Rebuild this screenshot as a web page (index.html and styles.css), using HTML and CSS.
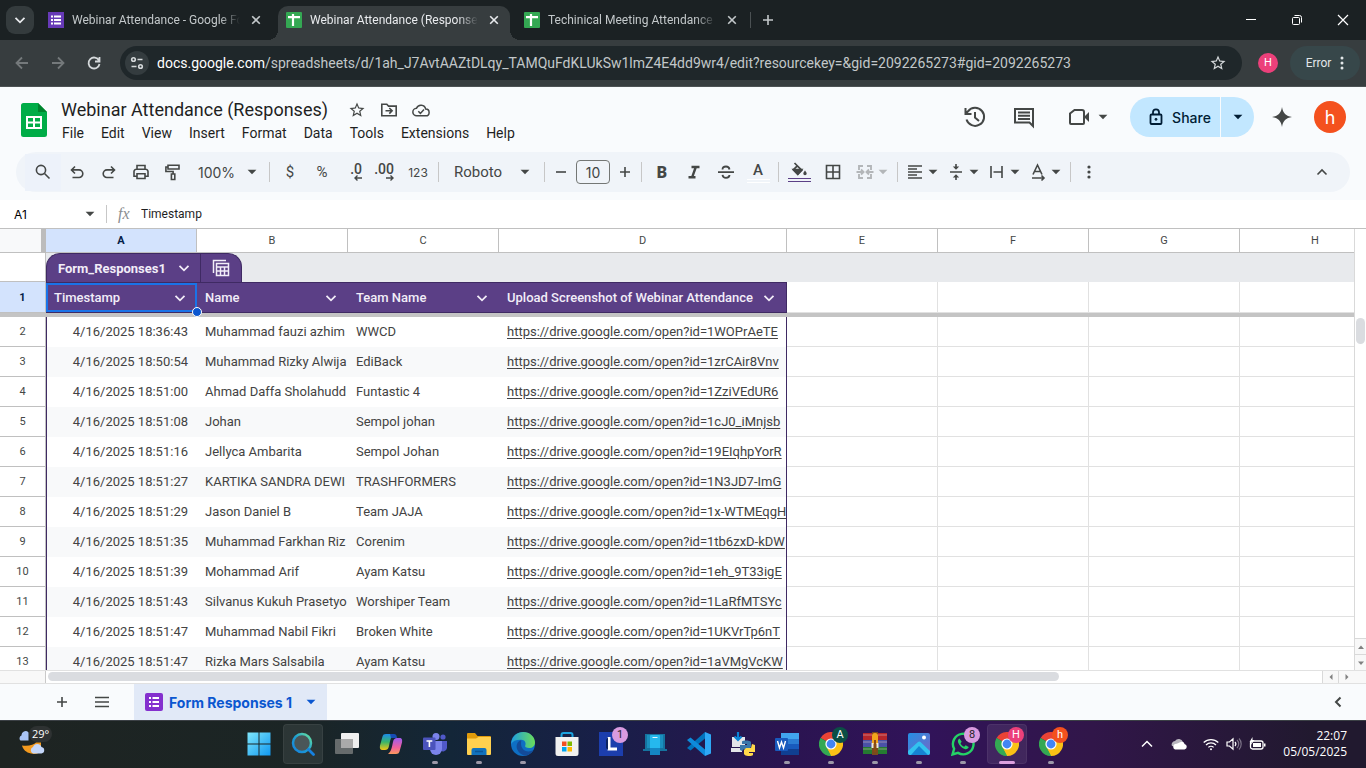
FILE: index.html
```html
<!DOCTYPE html>
<html lang="en">
<head>
    <meta charset="UTF-8">
    <meta name="viewport" content="width=device-width, initial-scale=1.0">
    <title>Webinar Attendance (Responses)</title>
    <link rel="stylesheet" href="styles.css">
</head>
<body>
    <svg class="sprite" aria-hidden="true">
        <symbol id="caret" viewBox="0 0 10 10"><path d="M.6 2.8h8.8L5 7.2z" fill="currentColor"/></symbol>
        <symbol id="close" viewBox="0 0 10 10"><path d="M1.2 1.2l7.6 7.6M8.8 1.2L1.2 8.8" stroke="currentColor" stroke-width="1.6"/></symbol>
        <symbol id="down" viewBox="0 0 12 12"><path d="M1.5 3.8L6 8.3l4.500-4.500" fill="none" stroke="currentColor" stroke-width="1.8"/></symbol>
        <symbol id="sheet" viewBox="0 0 16 16"><rect width="16" height="16" rx="1" fill="#34a853"/><path d="M2 5.200h12M7 2v12" stroke="#fff" stroke-width="2.200"/></symbol>
        <symbol id="form" viewBox="0 0 16 16"><path d="M3 4.500h2M3 8h2M3 11.500h2M6 4.500h7M6 8h7M6 11.500h7" stroke="#fff" stroke-width="1.800"/></symbol>
        <symbol id="star" viewBox="0 0 24 24"><path fill="currentColor" d="M22 9.240l-7.190-.620L12 2 9.190 8.630 2 9.240l5.460 4.730L5.820 21 12 17.270 18.180 21l-1.630-7.030L22 9.240zM12 15.400l-3.760 2.270 1-4.280-3.320-2.880 4.380-.380L12 6.100l1.710 4.040 4.380.380-3.320 2.880 1 4.280L12 15.400z"/></symbol>
        <symbol id="chrome" viewBox="0 0 24 24">
            <path d="M12 12L1.600 6A12 12 0 0 1 22.400 6z" fill="#ea4335"/>
            <path d="M12 12L22.400 6A12 12 0 0 1 12 24z" fill="#fbc116"/>
            <path d="M12 12v12A12 12 0 0 1 1.600 6z" fill="#34a853"/>
            <path d="M12 6.500h10.700" stroke="#ea4335" stroke-width="1"/>
            <path d="M7.200 14.800L12 24l4.800-9.200z" fill="#fbc116"/>
            <path d="M7.200 14.800L1.600 6l-1 8 6 8.500L12 24z" fill="#34a853"/>
            <circle cx="12" cy="12" r="5.600" fill="#fff"/><circle cx="12" cy="12" r="4.400" fill="#4285f4"/>
        </symbol>
    </svg>

    <header class="tabstrip">
        <button class="tab-search" aria-label="Search tabs"><svg class="i12"><use href="#down"/></svg></button>
        <div class="tab">
            <svg class="i16 favicon-form"><use href="#form"/></svg>
            <span class="tab-title">Webinar Attendance - Google Forms</span>
            <button aria-label="Close"><svg class="i10"><use href="#close"/></svg></button>
        </div>
        <div class="tab active">
            <svg class="i16"><use href="#sheet"/></svg>
            <span class="tab-title">Webinar Attendance (Responses)</span>
            <button aria-label="Close"><svg class="i10"><use href="#close"/></svg></button>
        </div>
        <div class="tab">
            <svg class="i16"><use href="#sheet"/></svg>
            <span class="tab-title">Techinical Meeting Attendance -</span>
            <button aria-label="Close"><svg class="i10"><use href="#close"/></svg></button>
        </div>
        <button class="new-tab" aria-label="New tab"><svg class="i12" viewBox="0 0 12 12"><path d="M6 1v10M1 6h10" stroke="currentColor" stroke-width="1.6"/></svg></button>
        <div class="window-buttons">
            <button aria-label="Minimize"><svg class="i12" viewBox="0 0 12 12"><path d="M1 5.500h10" stroke="#fff"/></svg></button>
            <button aria-label="Restore"><svg class="i12" viewBox="0 0 12 12" fill="none" stroke="#fff"><rect x="1.500" y="3.500" width="7" height="7" rx="1"/><path d="M3.500 1.500h5a2 2 0 0 1 2 2v5"/></svg></button>
            <button aria-label="Close window"><svg class="i12" viewBox="0 0 12 12"><path d="M1 1l10 10M11 1L1 11" stroke="#fff" stroke-width="1.200"/></svg></button>
        </div>
    </header>

    <div class="browser-bar">
        <button class="nav off" aria-label="Back"><svg class="i16" viewBox="0 0 16 16"><path d="M14 8H3M8 2.500L2.500 8 8 13.500"/></svg></button>
        <button class="nav off" aria-label="Forward"><svg class="i16" viewBox="0 0 16 16"><path d="M2 8h11M8 2.500L13.500 8 8 13.500"/></svg></button>
        <button class="nav" aria-label="Reload"><svg class="i16" viewBox="0 0 16 16"><path d="M13 5.500A5.500 5.500 0 1 0 13.500 9M13.500 2v4.500H9"/></svg></button>
        <div class="omnibox">
            <button class="site-info" aria-label="Site information"><svg class="i16" viewBox="0 0 16 16" fill="none" stroke="currentColor" stroke-width="1.600"><circle cx="4.500" cy="4.500" r="1.800"/><path d="M8.500 4.500h5M2.500 11.500h5"/><circle cx="11.500" cy="11.500" r="1.800"/></svg></button>
            <a class="url" href="#"><b>docs.google.com</b>/spreadsheets/d/1ah_J7AvtAAZtDLqy_TAMQuFdKLUkSw1lmZ4E4dd9wr4/edit?resourcekey=&amp;gid=2092265273#gid=2092265273</a>
            <button class="bookmark" aria-label="Bookmark this tab"><svg class="i18"><use href="#star"/></svg></button>
        </div>
        <button class="profile">H</button>
        <button class="error-chip">Error <svg viewBox="0 0 4 16" width="4" height="16" fill="currentColor"><circle cx="2" cy="3" r="1.500"/><circle cx="2" cy="8" r="1.500"/><circle cx="2" cy="13" r="1.500"/></svg></button>
    </div>

    <div class="doc-header">
        <a class="logo" href="#" aria-label="Sheets home"><svg width="26" height="34" viewBox="0 0 26 34"><path d="M2.500 0H17l9 9v22.500a2.500 2.500 0 0 1-2.500 2.500h-21A2.500 2.500 0 0 1 0 31.500v-29A2.500 2.500 0 0 1 2.500 0z" fill="#00ac47"/><path d="M17 0l9 9h-9z" fill="#00832d"/><path d="M5 13h16v13H5zM7 15v3.500h5V15zm7 0v3.500h5V15zm-7 5.500V24h5v-3.500zm7 0V24h5v-3.500z" fill="#fff" fill-rule="evenodd"/></svg></a>
        <div class="doc-info">
            <div class="title-row">
                <h1>Webinar Attendance (Responses)</h1>
                <button aria-label="Star"><svg class="i18"><use href="#star"/></svg></button>
                <button aria-label="Move"><svg class="i18" viewBox="0 0 18 18" fill="none" stroke="currentColor" stroke-width="1.600"><path d="M1.800 3.300h5l1.700 1.800h7.700v9.600H1.800zM5.500 9.800h6.300M9.300 7l2.800 2.800-2.800 2.800"/></svg></button>
                <button aria-label="Document status"><svg class="i18" viewBox="0 0 18 18" fill="none" stroke="currentColor" stroke-width="1.500"><path d="M4.800 14.800a3.800 3.800 0 0 1-.3-7.600 4.800 4.800 0 0 1 9.200.9 3.300 3.300 0 0 1 .1 6.700zM6.300 10.300l2.100 2.100 3.600-3.900"/></svg></button>
            </div>
            <nav class="menus">
                <button>File</button><button>Edit</button><button>View</button><button>Insert</button><button>Format</button><button>Data</button><button>Tools</button><button>Extensions</button><button>Help</button>
            </nav>
        </div>
        <div class="doc-actions">
            <button aria-label="History"><svg class="i24" viewBox="0 0 24 24" fill="none" stroke="currentColor" stroke-width="2"><path d="M3.500 14.500A9 9 0 1 0 5 6.300L2.500 9M2.500 3v6h6M12 7v5.500l4 3.500"/></svg></button>
            <button aria-label="Comments"><svg class="i24" viewBox="0 0 24 24" fill="none" stroke="currentColor" stroke-width="2"><path d="M21 21V4H3v13.500h14.500zM6 7.500h12M6 10.700h12M6 14h12"/></svg></button>
            <button class="meet" aria-label="Meet"><svg class="i24" viewBox="0 0 24 24" fill="none" stroke="currentColor" stroke-width="2"><path d="M3 8.500L7.500 5H15a2 2 0 0 1 2 2v11a1 1 0 0 1-1 1H4a1 1 0 0 1-1-1z"/><path d="M17 12l5-5v10z" fill="currentColor" stroke="none"/></svg><svg class="i10"><use href="#caret"/></svg></button>
            <div class="share">
                <button><svg width="14" height="18" viewBox="0 0 14 18" fill="none" stroke="currentColor" stroke-width="1.800"><rect x="1.500" y="6.500" width="11" height="9.500" rx="1"/><path d="M4 6.500V4.300a3 3 0 0 1 6 0v2.200"/><circle cx="7" cy="11.300" r="1" fill="currentColor" stroke-width="1"/></svg>Share</button>
                <button class="share-more" aria-label="Quick sharing actions"><svg class="i10"><use href="#caret"/></svg></button>
            </div>
            <button class="gemini" aria-label="Gemini"><svg class="i20" viewBox="0 0 20 20"><path d="M10 0c.8 6 4 9.200 10 10-6 .8-9.200 4-10 10-.8-6-4-9.200-10-10 6-.8 9.200-4 10-10z" fill="currentColor"/></svg></button>
            <button class="avatar">h</button>
        </div>
    </div>

    <div class="tools-wrap">
        <div class="tools">
            <button class="search" aria-label="Search the menus"><svg class="i18" viewBox="0 0 18 18"><circle cx="7" cy="7" r="4.600"/><path d="M10.500 10.500l5 5"/></svg></button>
            <button aria-label="Undo"><svg class="i18" viewBox="0 0 18 18"><path d="M4.500 14.500H11a3.800 3.800 0 0 0 0-7.600H4M7 3.500L3.500 7 7 10.500"/></svg></button>
            <button aria-label="Redo"><svg class="i18" viewBox="0 0 18 18"><path d="M13.500 14.500H7a3.800 3.800 0 0 1 0-7.600h7M11 3.500L14.500 7 11 10.500"/></svg></button>
            <button aria-label="Print"><svg class="i18" viewBox="0 0 18 18"><path d="M5 6V2.500h8V6M5 13.200H2V8.500A2.200 2.200 0 0 1 4.200 6.300h9.600A2.200 2.200 0 0 1 16 8.500v4.700h-3M5 10.800h8v4.700H5z"/></svg></button>
            <button aria-label="Paint format"><svg class="i18" viewBox="0 0 18 18"><path d="M4 2.300h11v3.700H4zM4 4H1.900v4.500h7.200v2.500M7.400 11h3.400v5.500H7.400z"/></svg></button>
            <label class="drop zoom"><select aria-label="Zoom"><option>100%</option></select><svg class="i10"><use href="#caret"/></svg></label>
            <span class="sep"></span>
            <button class="glyph">$</button>
            <button class="glyph">%</button>
            <button class="decimal" aria-label="Decrease decimal places"><b>.0</b><svg viewBox="0 0 8 6" width="8" height="6"><path d="M8 3H1M3.500.5L1 3l2.500 2.500"/></svg></button>
            <button class="decimal" aria-label="Increase decimal places"><b>.00</b><svg viewBox="0 0 8 6" width="8" height="6"><path d="M0 3h7M4.500.5L7 3 4.500 5.500"/></svg></button>
            <button class="formats">123</button>
            <span class="sep"></span>
            <label class="drop font"><select aria-label="Font"><option>Roboto</option></select><svg class="i10"><use href="#caret"/></svg></label>
            <span class="sep"></span>
            <button class="step" aria-label="Decrease font size"><svg class="i12" viewBox="0 0 12 12"><path d="M1 6h10"/></svg></button>
            <input class="size" aria-label="Font size" value="10">
            <button class="step" aria-label="Increase font size"><svg class="i12" viewBox="0 0 12 12"><path d="M1 6h10M6 1v10"/></svg></button>
            <span class="sep"></span>
            <button class="bold">B</button>
            <button aria-label="Italic"><svg class="i18" viewBox="0 0 18 18"><path stroke-width="2.400" d="M6.500 4h8M3.500 14.200h7M10.800 4l-3.600 10.200"/></svg></button>
            <button aria-label="Strikethrough"><svg class="i18" viewBox="0 0 18 18"><path stroke-width="1.800" d="M1 9.200h16M12.500 6.500c-.3-2-1.500-3-3.500-3S5.500 4.500 5.500 6.400M5.500 11.800c.3 2 1.500 3 3.500 3s3.500-1 3.500-2.700"/></svg></button>
            <button class="color-btn">A<i class="double white"></i></button>
            <span class="sep"></span>
            <button class="color-btn" aria-label="Fill color"><svg width="18" height="15" viewBox="0 0 18 15"><path d="M4.500 1l7.300 7.300-4 4L3.300 7.800l4-4" stroke-width="1.700"/><path d="M3.300 7.500h8.500l-4 4.800z" fill="currentColor"/><path d="M15 8.500s1.700 2 1.700 3a1.700 1.700 0 0 1-3.400 0c0-1 1.700-3 1.700-3z" fill="currentColor" stroke="none"/></svg><i class="double"></i></button>
            <button class="borders" aria-label="Borders"><svg class="i18" viewBox="0 0 18 18"><path d="M2.500 2.500h13v13h-13zM9 2.500v13M2.500 9h13"/></svg></button>
            <button class="split merge" disabled aria-label="Merge cells"><svg class="i20" viewBox="0 0 20 20"><path stroke-width="1.900" d="M8 4H4v4M4 12v4h4M12 4h4v4M16 12v4h-4M1.500 10H8M6 7.500L8.500 10 6 12.500M18.500 10H12M14 7.500L11.500 10l2.500 2.500"/></svg><svg class="i10"><use href="#caret"/></svg></button>
            <span class="sep"></span>
            <button class="split" aria-label="Horizontal align"><svg class="i20" viewBox="0 0 20 20"><path d="M3 4h14M3 7h9M3 10h14M3 13h9M3 16h14"/></svg><svg class="i10"><use href="#caret"/></svg></button>
            <button class="split" aria-label="Vertical align"><svg class="i20" viewBox="0 0 20 20"><path d="M4 10h12M10 2v3M10 18v-3"/><path d="M6.800 4.500h6.400L10 7.800zM6.800 15.500h6.400L10 12.200z" fill="currentColor" stroke="none"/></svg><svg class="i10"><use href="#caret"/></svg></button>
            <button class="split" aria-label="Text wrapping"><svg class="i20" viewBox="0 0 20 20"><path d="M4 4v12M15 4v12M6.500 10H15"/></svg><svg class="i10"><use href="#caret"/></svg></button>
            <button class="split" aria-label="Text rotation"><svg class="i20" viewBox="0 0 20 20"><path d="M5 12.500L9.500 3l4.500 9.500M6.500 9.500h6M4 16h12M13.500 13.500L16 16l-2.500 2.500"/></svg><svg class="i10"><use href="#caret"/></svg></button>
            <span class="sep"></span>
            <button class="more" aria-label="More"><svg viewBox="0 0 4 14" width="4" height="14" class="solid"><circle cx="2" cy="2" r="1.600"/><circle cx="2" cy="7" r="1.600"/><circle cx="2" cy="12" r="1.600"/></svg></button>
            <button class="hide-menus" aria-label="Hide the menus"><svg class="i12" viewBox="0 0 12 12"><path d="M1.500 8.500L6 4l4.500 4.500"/></svg></button>
        </div>
    </div>

    <div class="formula-bar">
        <label class="name-box"><input aria-label="Name box" value="A1"><svg class="i10"><use href="#caret"/></svg></label>
        <label class="fx" for="formula">fx</label>
        <input id="formula" class="formula" value="Timestamp">
    </div>

    <main class="sheet">
        <div class="viewport">
            <table>
                <colgroup><col class="num"><col><col><col><col class="wide"><col><col><col><col></colgroup>
                <thead>
                    <tr class="letters"><th class="corner"></th><th class="sel">A</th><th>B</th><th>C</th><th>D</th><th>E</th><th>F</th><th>G</th><th>H</th></tr>
                </thead>
                <tbody>
                    <tr class="table-tabs">
                        <th></th>
                        <td colspan="8"><div class="tabs"><button class="name">Form_Responses1 <svg class="i12"><use href="#down"/></svg></button><button aria-label="Table views"><svg class="i18" viewBox="0 0 18 18" fill="none" stroke="currentColor" stroke-width="1.500"><path d="M1.500 14V1.500H14M4.500 4.500h12v12h-12zM4.500 8h12M4.500 12h12M8.500 8v8.500M12.500 8v8.500"/></svg></button></div></td>
                    </tr>
                    <tr class="headings">
                        <th class="sel">1</th>
                        <td class="current"><div>Timestamp <svg class="i12"><use href="#down"/></svg></div><span class="handle"></span></td>
                        <td><div>Name <svg class="i12"><use href="#down"/></svg></div></td>
                        <td><div>Team Name <svg class="i12"><use href="#down"/></svg></div></td>
                        <td><div>Upload Screenshot of Webinar Attendance <svg class="i12"><use href="#down"/></svg></div></td>
                        <td></td><td></td><td></td><td></td>
                    </tr>
                    <tr class="freeze"><td colspan="9"></td></tr>
                </tbody>
                <tbody class="data">
                    <tr><th>2</th><td>4/16/2025 18:36:43</td><td>Muhammad fauzi azhim</td><td>WWCD</td><td><a href="#">https://drive.google.com/open?id=1WOPrAeTE</a></td><td></td><td></td><td></td><td></td></tr>
                    <tr><th>3</th><td>4/16/2025 18:50:54</td><td>Muhammad Rizky Alwija</td><td>EdiBack</td><td><a href="#">https://drive.google.com/open?id=1zrCAir8Vnv</a></td><td></td><td></td><td></td><td></td></tr>
                    <tr><th>4</th><td>4/16/2025 18:51:00</td><td>Ahmad Daffa Sholahudd</td><td>Funtastic 4</td><td><a href="#">https://drive.google.com/open?id=1ZziVEdUR6</a></td><td></td><td></td><td></td><td></td></tr>
                    <tr><th>5</th><td>4/16/2025 18:51:08</td><td>Johan</td><td>Sempol johan</td><td><a href="#">https://drive.google.com/open?id=1cJ0_iMnjsb</a></td><td></td><td></td><td></td><td></td></tr>
                    <tr><th>6</th><td>4/16/2025 18:51:16</td><td>Jellyca Ambarita</td><td>Sempol Johan</td><td><a href="#">https://drive.google.com/open?id=19EIqhpYorR</a></td><td></td><td></td><td></td><td></td></tr>
                    <tr><th>7</th><td>4/16/2025 18:51:27</td><td>KARTIKA SANDRA DEWI</td><td>TRASHFORMERS</td><td><a href="#">https://drive.google.com/open?id=1N3JD7-ImG</a></td><td></td><td></td><td></td><td></td></tr>
                    <tr><th>8</th><td>4/16/2025 18:51:29</td><td>Jason Daniel B</td><td>Team JAJA</td><td><a href="#">https://drive.google.com/open?id=1x-WTMEqgH</a></td><td></td><td></td><td></td><td></td></tr>
                    <tr><th>9</th><td>4/16/2025 18:51:35</td><td>Muhammad Farkhan Riz</td><td>Corenim</td><td><a href="#">https://drive.google.com/open?id=1tb6zxD-kDW</a></td><td></td><td></td><td></td><td></td></tr>
                    <tr><th>10</th><td>4/16/2025 18:51:39</td><td>Mohammad Arif</td><td>Ayam Katsu</td><td><a href="#">https://drive.google.com/open?id=1eh_9T33igE</a></td><td></td><td></td><td></td><td></td></tr>
                    <tr><th>11</th><td>4/16/2025 18:51:43</td><td>Silvanus Kukuh Prasetyo</td><td>Worshiper Team</td><td><a href="#">https://drive.google.com/open?id=1LaRfMTSYc</a></td><td></td><td></td><td></td><td></td></tr>
                    <tr><th>12</th><td>4/16/2025 18:51:47</td><td>Muhammad Nabil Fikri</td><td>Broken White</td><td><a href="#">https://drive.google.com/open?id=1UKVrTp6nT</a></td><td></td><td></td><td></td><td></td></tr>
                    <tr><th>13</th><td>4/16/2025 18:51:47</td><td>Rizka Mars Salsabila</td><td>Ayam Katsu</td><td><a href="#">https://drive.google.com/open?id=1aVMgVcKW</a></td><td></td><td></td><td></td><td></td></tr>
                </tbody>
            </table>
        </div>
        <div class="vscroll">
            <div class="vtrack"><div class="vthumb"></div></div>
            <button aria-label="Scroll up"><svg width="6" height="6" viewBox="0 0 6 6"><path d="M0 5h6L3 1.500z"/></svg></button>
            <button aria-label="Scroll down"><svg width="6" height="6" viewBox="0 0 6 6"><path d="M0 1.500h6L3 5z"/></svg></button>
        </div>
    </main>
    <div class="hscroll">
        <div class="htrack"><div class="hthumb"></div></div>
        <button aria-label="Scroll left"><svg width="6" height="6" viewBox="0 0 6 6"><path d="M4.500 0v6L1.500 3z"/></svg></button>
        <button aria-label="Scroll right"><svg width="6" height="6" viewBox="0 0 6 6"><path d="M1.500 0v6l3-3z"/></svg></button>
    </div>

    <footer class="sheet-bar">
        <button class="bar-btn" aria-label="Add sheet"><svg class="i12" viewBox="0 0 12 12"><path d="M6 1v10M1 6h10" stroke="currentColor" stroke-width="1.600"/></svg></button>
        <button class="bar-btn" aria-label="All sheets"><svg width="14" height="12" viewBox="0 0 14 12"><path d="M0 1.500h14M0 6h14M0 10.500h14" stroke="currentColor" stroke-width="1.600"/></svg></button>
        <button class="sheet-tab"><svg class="i18 form-badge" viewBox="0 0 18 18"><path d="M4 5h2M4 9h2M4 13h2M7.500 5H14M7.500 9H14M7.500 13H14" stroke="#fff" stroke-width="1.800"/></svg><span>Form Responses 1</span><svg class="i10"><use href="#caret"/></svg></button>
        <button class="side" aria-label="Show side panel"><svg class="i12" viewBox="0 0 12 12"><path d="M8.500 1.500L4 6l4.500 4.500" fill="none" stroke="currentColor" stroke-width="2"/></svg></button>
    </footer>

    <div class="taskbar">
        <button class="weather" aria-label="Weather"><svg width="28" height="26" viewBox="0 0 28 26"><path d="M1.500 9.500a3 3 0 0 1 1-5 4 4 0 0 1 7-3v8z" fill="#a9c4f5"/><path d="M3 14.500c7 1 12-1 14-3h5v8c-1 3-6 4-10 3-5-1-8-4-9-8z" fill="#f39a1f"/><path d="M14 22.500a3.500 3.500 0 0 1 0-6.500 4.500 4.500 0 0 1 8.500 0 3.300 3.300 0 0 1 0 6.500z" fill="#c4d7fa"/></svg><span>29°</span></button>
        <nav class="apps">
            <button aria-label="Start"><svg class="i24" viewBox="0 0 24 24"><defs><linearGradient id="gw" x2="1" y2="1"><stop stop-color="#7fe6fb"/><stop offset="1" stop-color="#1098f0"/></linearGradient></defs><path d="M.5.500h11v11H.5zM12.500.500h11v11h-11zM.5 12.500h11v11H.5zM12.500 12.500h11v11h-11z" fill="url(#gw)"/></svg></button>
            <button class="lit" aria-label="Search"><svg class="i24" viewBox="0 0 24 24"><defs><linearGradient id="gs" x1="1" x2="0" y2="1"><stop stop-color="#6ce59c"/><stop offset=".5" stop-color="#1d9fd1"/><stop offset="1" stop-color="#1681df"/></linearGradient></defs><circle cx="11" cy="11" r="9" fill="#4a5658" stroke="url(#gs)" stroke-width="2.500"/><path d="M17.500 17.500l5 5" stroke="#1681df" stroke-width="2.800" stroke-linecap="round"/></svg></button>
            <button aria-label="Task view"><svg class="i24" viewBox="0 0 24 24"><rect x="6" y="1" width="18" height="15" rx="1" fill="#f0f0f0"/><rect y="7" width="18" height="15" rx="1" fill="#666b6c"/><path d="M6 7h12v9H6z" fill="#aaa"/></svg></button>
            <button aria-label="Copilot"><svg class="i24" viewBox="0 0 24 24"><defs><linearGradient id="gc" x2="0" y2="1"><stop stop-color="#1b8bea"/><stop offset=".5" stop-color="#39b56a"/><stop offset="1" stop-color="#f4c613"/></linearGradient><linearGradient id="gd" x2="0" y2="1"><stop stop-color="#9d5cf0"/><stop offset=".6" stop-color="#f2609b"/><stop offset="1" stop-color="#fb9a5c"/></linearGradient></defs><path d="M7 2h8c-3 2-4 7-5 12-.6 3-2 4-4 4H3.500C1 18 .5 16 1 13.500l2.500-9C4 2.800 5 2 7 2z" fill="url(#gc)"/><path d="M11 2h4c2 0 2.500 1 3 4H12z" fill="#174cb3"/><path d="M17 22H9c3-2 4-7 5-12 .6-3 2-4 4-4h2.500C23 6 23.500 8 23 10.500l-2.500 9c-.5 1.700-1.500 2.500-3.500 2.500z" fill="url(#gd)"/></svg></button>
            <button class="open" aria-label="Teams"><svg class="i24" viewBox="0 0 24 24"><circle cx="20" cy="5" r="2.600" fill="#5059c9"/><circle cx="13" cy="4.500" r="3.500" fill="#7b83eb"/><path d="M17 9h7v7a4 4 0 0 1-7 2z" fill="#5059c9"/><path d="M7 9h12v8a6 6 0 0 1-12 0z" fill="#7b83eb"/><rect y="5.500" width="12.500" height="12.500" rx="1" fill="#4b53bc"/><path d="M3.500 9h5.800M6.400 9v6" stroke="#fff" stroke-width="1.600"/></svg></button>
            <button class="open" aria-label="File Explorer"><svg class="i24" viewBox="0 0 24 24"><path d="M0 2a1 1 0 0 1 1-1h7l2.500 3H23a1 1 0 0 1 1 1v5H0z" fill="#e09b0b"/><path d="M0 6.500h9L11.500 5H24v17a1 1 0 0 1-1 1H1a1 1 0 0 1-1-1z" fill="#ffd04f"/><path d="M4.500 23v-5a2 2 0 0 1 2-2h11a2 2 0 0 1 2 2v5z" fill="#1172bd"/><path d="M8 19.500h8" stroke="#0b5596" stroke-width="1.500"/></svg></button>
            <button class="open" aria-label="Edge"><svg class="i24" viewBox="0 0 24 24"><defs><linearGradient id="ge" x2="1"><stop stop-color="#1e9de0"/><stop offset="1" stop-color="#6bde58"/></linearGradient></defs><circle cx="12" cy="12" r="12" fill="#0e6fc4"/><path d="M.3 10C1.500 3.500 6.500 0 12.200 0 19 0 24 5 24 10.500c0 3.500-2.500 5.500-5.800 5.500-3 0-4.700-1-4-2.500.8-1.500.8-5.500-4-5.800C5 7.500 1.500 9 .3 12z" fill="url(#ge)"/><path d="M10.500 8C6 9 4.500 14 6.500 18c1.500 3.500 5 5.500 8.500 5.600 3.500-.6 6-3 7.300-5.300-7 3.500-14.300-1.300-11.800-10.300z" fill="#134b99"/></svg></button>
            <button aria-label="Microsoft Store"><svg class="i24" viewBox="0 0 24 24"><path d="M6.500 6V3a2 2 0 0 1 2-2h7a2 2 0 0 1 2 2v3" fill="none" stroke="#1ba3df" stroke-width="2"/><path d="M.5 5h23v16.500a2.500 2.500 0 0 1-2.500 2.500H3a2.500 2.500 0 0 1-2.500-2.500z" fill="#f1f1f1"/><path d="M7 9.500h4.500V14H7z" fill="#f25022"/><path d="M12.500 9.500H17V14h-4.500z" fill="#7fba00"/><path d="M7 15h4.500v4.500H7z" fill="#00a4ef"/><path d="M12.500 15H17v4.500h-4.500z" fill="#ffb900"/></svg></button>
            <button aria-label="Launcher"><svg class="i24" viewBox="0 0 24 24"><path d="M0 0h24v24H0z" fill="#1c3ead"/><path d="M10 5v12h8" fill="none" stroke="#fff" stroke-width="3"/><path d="M7 8l2-3v13l-2-2z" fill="#0d2461"/></svg><span class="badge">1</span></button>
            <button aria-label="Your devices"><svg class="i24" viewBox="0 0 24 24"><path d="M2 2h20v15h2v2H0v-2h2z" fill="#15739f"/><rect x="4" y="3" width="16" height="13" fill="#1a8fbe"/><rect x="7" y="3" width="10" height="20" rx="1" fill="#25b8ee"/><path d="M9.500 5.500h5" stroke="#dff6ff"/><path d="M7 16h10v7H7z" fill="#1486c4"/></svg></button>
            <button aria-label="Visual Studio Code"><svg class="i24" viewBox="0 0 24 24"><path d="M18 0l6 2.500v19L18 24z" fill="#2ea8f5"/><path d="M18 0v6.500L3.500 18.500 0 16z" fill="#0073bd"/><path d="M0 8l3.500-2.500L18 17.500V24z" fill="#0e8bdb"/></svg></button>
            <button aria-label="Python"><svg class="i24" viewBox="0 0 24 24"><path d="M1 5h13v10H1zM0 16h11v4H0z" fill="#e3e5e8"/><path d="M7 0v7M3.500 4.500L7 8l3.500-3.500" fill="none" stroke="#0a84d6" stroke-width="2.200"/><path d="M9 18v-5h7v-1h-5V9.500C12 8 19 8 20 10v5l-2 2h-5l-2 2z" fill="#3a76aa"/><path d="M24 13v7h-6v1h4v2c-2 1.500-8 1.500-9-1v-4l2-2h5l1-4z" fill="#ffd94a"/></svg></button>
            <button class="open" aria-label="Word"><svg class="i24" viewBox="0 0 24 24"><path d="M6 1h18v6H6z" fill="#41a5ee"/><path d="M6 7h18v5H6z" fill="#2b7cd3"/><path d="M6 12h18v5H6z" fill="#185abd"/><path d="M6 17h18v6H6z" fill="#103f91"/><rect y="6" width="13" height="13" rx="1" fill="#185abd"/><path d="M2.500 9l2 7L6.500 10l2 6 2-7" fill="none" stroke="#fff" stroke-width="1.400"/></svg></button>
            <button class="open" aria-label="Chrome"><svg class="i24"><use href="#chrome"/></svg><span class="badge green">A</span></button>
            <button class="open" aria-label="WinRAR"><svg class="i24" viewBox="0 0 24 24"><path d="M0 1h24v7H0z" fill="#b3262c"/><path d="M0 8h24v7H0z" fill="#4a51a6"/><path d="M0 15h24v7H0z" fill="#257b31"/><path d="M0 3h24M0 10h24M0 17h24" stroke="#e6c9c4" stroke-opacity=".5"/><path d="M9 0h6v23H9z" fill="#7a4a1d"/><path d="M9 4a3 3 0 0 1 6 0v8H9z" fill="#f4a51c"/><path d="M8.500 11h2v5h-2zM13.500 11h2v5h-2z" fill="#f0ead8"/><path d="M11 8h2v12h-2z" fill="#8b4a12"/></svg></button>
            <button class="open" aria-label="Photos"><svg class="i24" viewBox="0 0 24 24"><defs><linearGradient id="gp" x2="1" y2="1"><stop stop-color="#2390e5"/><stop offset="1" stop-color="#7666c4"/></linearGradient></defs><rect x="1" y="1" width="22" height="22" rx="2" fill="url(#gp)"/><path d="M1 19L11 10a2 2 0 0 1 2.500 0L23 19v2a2 2 0 0 1-2 2H3a2 2 0 0 1-2-2z" fill="#32c2ef"/><path d="M12 14l9 9H4z" fill="#1683d2"/><circle cx="17" cy="5.500" r="2" fill="#fff"/></svg></button>
            <button class="open" aria-label="WhatsApp"><svg class="i24" viewBox="0 0 24 24"><path d="M1.500 22.500l1.600-5.700A10.300 10.300 0 1 1 7 20.900z" fill="none" stroke="#25d366" stroke-width="2.400"/><path d="M8.500 6.500c-1.500.8-2 2.200-1.300 4.200 1.200 3 3.300 5.200 6.500 6.300 2 .6 3.500-.3 4-2l-3-1.700-1.500 1.500c-1.500-.6-3-2-3.700-3.600l1.200-1.400z" fill="#25d366"/></svg><span class="badge">8</span></button>
            <button class="open lit current-app" aria-label="Chrome"><svg class="i24"><use href="#chrome"/></svg><span class="badge pink">H</span></button>
            <button class="open" aria-label="Chrome"><svg class="i24"><use href="#chrome"/></svg><span class="badge orange">h</span></button>
        </nav>
        <div class="tray">
            <button aria-label="Hidden icons"><svg class="i12" viewBox="0 0 12 12"><path d="M1 8.500l5-5 5 5" fill="none" stroke="#fff" stroke-width="1.500"/></svg></button>
            <button class="cloud" aria-label="OneDrive"><svg width="16" height="12" viewBox="0 0 16 12"><path d="M1 8a3.500 3.500 0 0 1 3-5 4.500 4.500 0 0 1 8 1l-6 5z" fill="#b9b6bf"/><path d="M4 11.500a3 3 0 0 1 0-5.500c2 0 4-1.500 6-2s3 .5 3.500 2a2.800 2.800 0 0 1 0 5.500z" fill="#fff"/></svg></button>
            <button class="status" aria-label="Network, volume, battery">
                <svg width="16" height="14" viewBox="0 0 16 14" fill="none" stroke="#fff" stroke-width="1.300"><path d="M.7 5.500a10.500 10.500 0 0 1 14.600 0M3 8a7 7 0 0 1 10 0M5.400 10.400a3.700 3.700 0 0 1 5.200 0"/><circle cx="8" cy="12.300" r="1" fill="#fff" stroke="none"/></svg>
                <svg width="16" height="14" viewBox="0 0 16 14" fill="none" stroke="#fff" stroke-width="1.200"><path d="M1 5h2.500L7 1.800v10.400L3.500 9H1zM9 5a3 3 0 0 1 0 4"/><path d="M11 3a5.500 5.500 0 0 1 0 8M13 1.500a8 8 0 0 1 0 11" stroke="#7b7286"/></svg>
                <svg width="17" height="14" viewBox="0 0 17 14"><rect x="1.500" y="4" width="12.500" height="8" rx="2" fill="none" stroke="#fff" stroke-width="1.300"/><path d="M4 6h8v4H4zM15 6.500h1.500v3H15zM3.500 0L.5 5h2l-1 3.500L5.500 3h-2z" fill="#fff"/></svg>
            </button>
            <button class="clock"><span>22:07</span><span>05/05/2025</span></button>
        </div>
    </div>
</body>
</html>
```
FILE: styles.css
```css
* {
    box-sizing: border-box;
}
body {
    margin: 0;
    height: 100vh;
    display: flex;
    flex-direction: column;
    overflow: hidden;
    background: #f9fbfd;
    font-family: Inter, Roboto, sans-serif;
    font-size: 14px;
    color: #1f1f1f;
}
button, input, select {
    font: inherit;
    color: inherit;
    background: none;
    border: 0;
    padding: 0;
    margin: 0;
    outline: 0;
}
button {
    display: flex;
    align-items: center;
    justify-content: center;
    cursor: pointer;
}
a {
    color: inherit;
    text-decoration: none;
}
svg {
    display: block;
    flex: none;
}
.sprite {
    position: absolute;
    width: 0;
    height: 0;
}
.i10 { width: 10px; height: 10px; }
.i12 { width: 12px; height: 12px; }
.i16 { width: 16px; height: 16px; }
.i18 { width: 18px; height: 18px; }
.i20 { width: 20px; height: 20px; }
.i24 { width: 24px; height: 24px; }

/* browser */
.tabstrip {
    flex: none;
    height: 40px;
    display: flex;
    align-items: center;
    background: #1b2123;
    color: #c3c8ca;
    font-family: Roboto, sans-serif;
    font-size: 12px;
}
.tab-search {
    width: 28px;
    height: 28px;
    margin: 0 6px;
    border-radius: 9px;
    background: #343b3d;
    color: #e8eaed;
}
.tab {
    position: relative;
    flex: 0 0 232px;
    height: 34px;
    margin: 6px 6px 0 0;
    padding: 0 8px 6px;
    display: flex;
    align-items: center;
    gap: 8px;
}
.tab-title {
    width: 168px;
    overflow: hidden;
    white-space: nowrap;
    -webkit-mask-image: linear-gradient(to right, #000 88%, transparent);
    mask-image: linear-gradient(to right, #000 88%, transparent);
}
.tab button {
    width: 16px;
    height: 16px;
}
.favicon-form {
    background: #673ab7;
}
.tab.active {
    background: #373d3f;
    color: #e8eaed;
    border-radius: 10px 10px 0 0;
}
.tab.active::before, .tab.active::after {
    content: "";
    position: absolute;
    bottom: 0;
    width: 10px;
    height: 10px;
}
.tab.active::before {
    left: -10px;
    background: radial-gradient(circle at 0 0, transparent 10px, #373d3f 10px);
}
.tab.active::after {
    right: -10px;
    background: radial-gradient(circle at 100% 0, transparent 10px, #373d3f 10px);
}
.new-tab {
    width: 34px;
    height: 16px;
    margin-left: -4px;
    border-left: 1px solid #4b5153;
}
.window-buttons {
    margin-left: auto;
    display: flex;
}
.window-buttons button {
    width: 46px;
    height: 40px;
}
.browser-bar {
    flex: none;
    height: 47px;
    padding: 0 6px 1px 4px;
    display: flex;
    align-items: center;
    background: #373d3f;
    border-bottom: 1px solid #4d5254;
    color: #d5d9db;
    font-family: Roboto, sans-serif;
    font-size: 14px;
}
.nav {
    width: 36px;
    height: 34px;
}
.nav path {
    fill: none;
    stroke: currentColor;
    stroke-width: 1.8;
}
.nav.off {
    color: #74797b;
}
.omnibox {
    flex: 1;
    min-width: 0;
    height: 34px;
    margin-left: 8px;
    padding: 0 12px 0 5px;
    display: flex;
    align-items: center;
    border-radius: 17px;
    background: #1f272a;
}
.site-info {
    width: 24px;
    height: 24px;
    border-radius: 50%;
    background: #343c3f;
}
.url {
    flex: 1;
    min-width: 0;
    margin-left: 8px;
    overflow: hidden;
    white-space: nowrap;
    color: #c2c7c9;
}
.url b {
    font-weight: 400;
    color: #fff;
}
.bookmark {
    width: 24px;
    height: 24px;
}
.profile {
    width: 20px;
    height: 20px;
    margin: 0 12px 0 16px;
    border-radius: 50%;
    background: #ec407a;
    color: #fff;
    font-size: 11px;
}
.error-chip {
    width: 70px;
    height: 34px;
    gap: 9px;
    border-radius: 17px;
    background: #37474a;
    color: #e3e8e9;
    font-size: 12px;
}

/* document header */
.doc-header {
    flex: none;
    height: 65px;
    padding: 10px 20px 0 21px;
    display: flex;
}
.logo {
    padding-top: 6px;
    margin-right: 6px;
}
.title-row {
    display: flex;
    align-items: center;
    height: 26px;
    padding-left: 8px;
    gap: 14px;
    color: #444746;
}
.title-row h1 {
    margin: 0 6px 0 0;
    font-size: 18px;
    font-weight: 400;
    font-family: Roboto, sans-serif;
    line-height: 26px;
    color: #1f1f1f;
    white-space: nowrap;
}
.menus {
    display: flex;
    gap: 1px;
    padding-left: 1px;
    font-family: Roboto, sans-serif;
}
.menus button {
    height: 20px;
    padding: 0 8px;
}
.doc-actions {
    height: 40px;
    margin-left: auto;
    display: flex;
    align-items: center;
    color: #444746;
}
.doc-actions > button {
    width: 49px;
    height: 40px;
}
.doc-actions > .meet {
    width: 73px;
    padding-left: 5px;
    gap: 7px;
}
.share {
    display: flex;
    margin: 0 8px 0 9px;
    gap: 1px;
    color: #001d35;
    font-family: Inter, sans-serif;
    font-weight: 500;
}
.share button {
    width: 90px;
    height: 40px;
    gap: 9px;
    padding-left: 10px;
    border-radius: 20px 0 0 20px;
    background: #c2e7ff;
}
.share .share-more {
    width: 33px;
    padding: 0;
    border-radius: 0 20px 20px 0;
}
.doc-actions > .gemini {
    width: 40px;
}
.doc-actions > .avatar {
    width: 32px;
    height: 32px;
    margin-left: 12px;
    border-radius: 50%;
    background: #f4511e;
    color: #fff;
    font-size: 18px;
}

/* toolbar */
.tools-wrap {
    flex: none;
    padding: 0 16px 8px;
}
.tools {
    height: 40px;
    padding: 0 12px 0 9px;
    display: flex;
    align-items: center;
    border-radius: 20px;
    background: #f0f4f9;
    color: #444746;
}
.tools > button {
    flex: none;
    width: 32px;
    height: 32px;
}
.tools svg {
    fill: none;
    stroke: currentColor;
    stroke-width: 1.6;
}
.tools svg:has(use) {
    stroke: none;
}
.tools .solid {
    fill: currentColor;
    stroke: none;
}
.tools > .search {
    width: 36px;
    height: 37px;
    background: #edf2fa;
}
.sep {
    flex: none;
    width: 1px;
    height: 20px;
    margin: 0 4px;
    background: #c7c7c7;
}
.drop {
    display: flex;
    align-items: center;
    justify-content: space-between;
    padding: 0 8px 0 9px;
}
.drop select {
    appearance: none;
    flex: 1;
    min-width: 0;
}
.zoom {
    width: 76px;
}
.font {
    width: 97px;
    padding: 0 10px 0 11px;
    font-family: Roboto, sans-serif;
    font-size: 15px;
}
.glyph {
    font-family: Roboto, sans-serif;
    font-size: 15px;
}
.decimal {
    flex-direction: column;
    align-items: flex-end;
    font-family: Roboto, sans-serif;
    font-size: 14px;
    line-height: 12px;
    padding-right: 8px;
}
.decimal b {
    font-weight: 500;
}
.tools .decimal svg {
    stroke-width: 1.4;
}
.formats {
    font-size: 12px;
}
.tools > .step {
    width: 24px;
}
.size {
    width: 34px;
    height: 24px;
    margin: 0 3px;
    border: 1px solid #747775;
    border-radius: 4px;
    text-align: center;
}
.bold {
    font-family: Roboto, sans-serif;
    font-weight: 900;
    font-size: 16px;
}
.color-btn {
    flex-direction: column;
    gap: 1px;
    font-family: Roboto, sans-serif;
    font-size: 15px;
    font-weight: 500;
    line-height: 16px;
}
.double {
    width: 23px;
    height: 4px;
    border: solid #5b3f86;
    border-width: 1px 0;
}
.double.white {
    border-color: #fff;
}
.tools > .borders {
    width: 36px;
}
.tools > .split {
    width: 41px;
    justify-content: flex-start;
    padding-left: 3px;
    gap: 3px;
}
.tools > .merge {
    margin-left: 1px;
    color: #b3b6b9;
}
.tools > .more {
    width: 28px;
}
.tools > .hide-menus {
    margin-left: auto;
}

/* formula bar */
.formula-bar {
    flex: none;
    height: 29px;
    display: flex;
    align-items: center;
    background: #fff;
    border-bottom: 1px solid #c0c0c0;
    font-size: 12px;
}
.name-box {
    width: 107px;
    height: 18px;
    padding: 0 11px 0 14px;
    display: flex;
    align-items: center;
    border-right: 1px solid #c7c7c7;
    color: #444746;
}
.name-box input {
    flex: 1;
    min-width: 0;
    color: #000;
}
.fx {
    width: 34px;
    padding-left: 11px;
    font: italic 16px "Liberation Serif", serif;
    color: #8a8d90;
}
.formula {
    flex: 1;
    font-family: Roboto, sans-serif;
    font-size: 12px;
    color: #1f1f1f;
}

/* grid */
.sheet {
    flex: 1;
    min-height: 0;
    display: flex;
}
.viewport {
    flex: 1;
    min-width: 0;
    overflow: hidden;
    background: #fff;
}
table {
    width: 1391px;
    table-layout: fixed;
    border-collapse: separate;
    border-spacing: 0;
    font-family: Roboto, sans-serif;
    font-size: 13px;
    color: #434343;
}
col { width: 151px; }
col.num { width: 46px; }
col.wide { width: 288px; }
th, td {
    height: 30px;
    padding: 0;
    border: solid #e1e1e1;
    border-width: 0 1px 1px 0;
    overflow: hidden;
    white-space: nowrap;
}
th {
    border-color: #c0c0c0;
    font-weight: 400;
    font-size: 11px;
    color: #444746;
    background: #fff;
}
th.sel {
    background: #d3e3fd;
    color: #041e49;
    font-weight: 700;
}
.letters th {
    height: 24px;
}
.letters .corner {
    background: #f8f9fa;
    border-right: 5px solid #bcbcbc;
}
.table-tabs th, .table-tabs td {
    height: 29px;
}
.table-tabs td {
    background: #e8eaed;
    border: 0;
}
.tabs {
    display: flex;
    height: 29px;
    color: #f2edf8;
}
.tabs button {
    width: 41px;
    background: #5b3f86;
    border: 1px solid #3f2a63;
    border-width: 1px 1px 0 0;
    border-radius: 0 14px 0 0;
}
.tabs .name {
    width: 155px;
    justify-content: space-between;
    padding: 0 10px 0 11px;
    border-left-width: 1px;
    border-radius: 14px 0 0 0;
    font-weight: 700;
}
.headings th, .headings td {
    height: 31px;
}
.headings td:nth-child(-n+5) {
    background: #5b3f86;
    border: 1px solid #3f2a63;
    border-width: 1px 0;
    color: #f2edf8;
    font-weight: 500;
}
.headings td:nth-child(5) {
    border-right-width: 1px;
}
.headings div {
    display: flex;
    align-items: center;
    justify-content: space-between;
    padding: 0 11px 0 8px;
}
.headings .current {
    position: relative;
    overflow: visible;
    box-shadow: inset 0 0 0 2px #1a73e8;
}
.handle {
    position: absolute;
    z-index: 1;
    right: -5px;
    bottom: -5px;
    width: 10px;
    height: 10px;
    border: 1px solid #fff;
    border-radius: 50%;
    background: #0b57d0;
}
.freeze td {
    height: 4px;
    border: 0;
    background: #c4c4c4;
}
.data th {
    padding-bottom: 1px;
}
.data td:nth-child(-n+5) {
    padding: 0 0 2px 8px;
    border: 0;
}
.data td:nth-child(2) {
    padding-right: 9px;
    text-align: right;
    border-left: 1px solid #3f2a63;
}
.data td:nth-child(5) {
    border-right: 1px solid #3f2a63;
}
.data tr:nth-child(even) td:nth-child(-n+5) {
    background: #f8f9fa;
}
.data a {
    text-decoration: underline;
    text-underline-offset: 2px;
}
.vscroll {
    flex: 0 0 12px;
    display: flex;
    flex-direction: column;
    background: #fff;
    border-left: 1px solid #d9d9d9;
}
.vtrack {
    flex: 1;
    padding-top: 89px;
}
.vthumb {
    height: 26px;
    margin: 0 1px;
    border-radius: 5px;
    background: #dadce0;
}
.vscroll button {
    height: 16px;
    border-top: 1px solid #d9d9d9;
    background: #f8f8f8;
}
.vscroll path, .hscroll path {
    fill: #808080;
}
.hscroll {
    flex: none;
    height: 14px;
    padding-right: 12px;
    display: flex;
    background: #f8f8f8;
    border: solid #e1e1e1;
    border-width: 1px 0;
}
.htrack {
    flex: 1;
    margin-left: 45px;
    padding: 1px 2px;
    border-left: 1px solid #c9c9c9;
    background: #fff;
}
.hthumb {
    width: 79.5%;
    height: 9px;
    border-radius: 5px;
    background: #dadce0;
}
.hscroll button {
    width: 16px;
    border-left: 1px solid #d9d9d9;
}

/* sheet tabs */
.sheet-bar {
    flex: none;
    height: 36px;
    padding: 0 12px 0 42px;
    display: flex;
    align-items: stretch;
    background: #f9fbfd;
    color: #444746;
}
.bar-btn {
    width: 40px;
}
.sheet-tab {
    width: 193px;
    margin-left: 12px;
    padding: 0 11px;
    gap: 6px;
    background: #e1e9f7;
    color: #0b57d0;
    font-weight: 700;
    white-space: nowrap;
}
.sheet-tab span {
    flex: 1;
    text-align: left;
}
.form-badge {
    border-radius: 2px;
    background: #8430ce;
}
.side {
    width: 32px;
    margin-left: auto;
}

/* taskbar */
.taskbar {
    flex: none;
    height: 48px;
    display: flex;
    align-items: center;
    background: linear-gradient(to right, #1e2422 0, #1b2525 22%, #132638 33%, #181f48 44%, #2a1450 57%, #311359 68%, #311649 80%, #21192f 96%);
    box-shadow: inset 0 1px #3b4045;
    color: #fff;
    font-family: "Open Sans", sans-serif;
    font-size: 12px;
}
.weather {
    position: relative;
    flex: 0 0 218px;
    margin-right: 19px;
    height: 48px;
    justify-content: flex-start;
    padding-left: 19px;
}
.weather span {
    position: absolute;
    left: 29px;
    top: 6px;
    padding: 0 3px;
    border-radius: 8px;
    background: #2e3232;
    font-size: 11px;
    line-height: 16px;
}
.apps {
    display: flex;
    gap: 4px;
    padding: 0 2px;
}
.apps button {
    position: relative;
    width: 40px;
    height: 40px;
    border-radius: 4px;
}
.lit {
    background: rgba(255, 255, 255, .08);
    box-shadow: inset 0 0 0 1px rgba(255, 255, 255, .06);
}
.open::after {
    content: "";
    position: absolute;
    bottom: 0;
    left: 17px;
    width: 6px;
    height: 3px;
    border-radius: 2px;
    background: #9c98a8;
}
.current-app::after {
    left: 12px;
    width: 16px;
    background: #dda0e0;
}
.badge {
    position: absolute;
    top: 3px;
    right: 3px;
    width: 16px;
    height: 16px;
    border-radius: 50%;
    background: #d99be0;
    color: #1f1f1f;
    font: 11px/16px Roboto, sans-serif;
}
.badge.green { background: #0b4f45; color: #fff; }
.badge.pink { background: #ec407a; color: #fff; }
.badge.orange { background: #f4511e; color: #fff; }
.tray {
    margin-left: auto;
    padding-right: 19px;
    display: flex;
    align-items: center;
}
.tray button {
    height: 40px;
}
.cloud {
    margin-left: 18px;
}
.tray .status {
    gap: 7px;
    margin: 0 17px 0 16px;
}
.tray .clock {
    flex-direction: column;
    align-items: flex-end;
    line-height: 16px;
}
```
